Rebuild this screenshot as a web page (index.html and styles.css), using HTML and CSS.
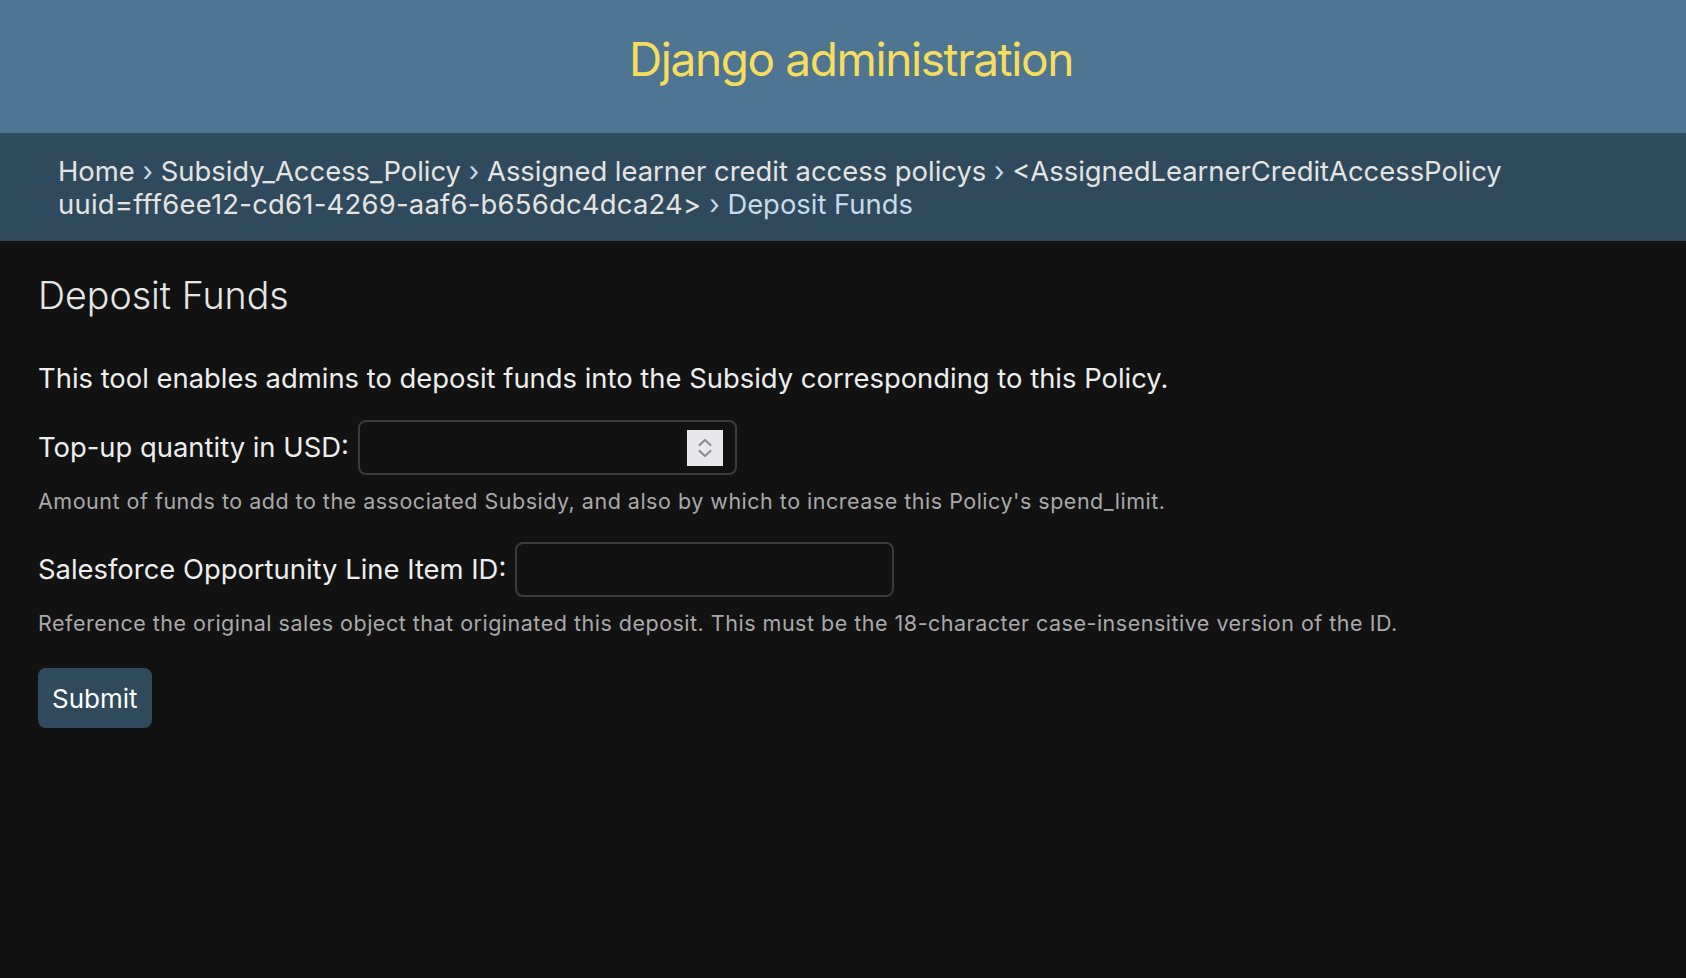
FILE: index.html
```html
<!DOCTYPE html>
<html lang="en">
<head>
<meta charset="utf-8">
<title>Deposit Funds | Django site admin</title>
<link rel="stylesheet" href="styles.css">
</head>
<body>
<header class="site-header">
  <h1 class="branding">Django administration</h1>
</header>
<nav class="breadcrumbs">
  <a href="#">Home</a> <span class="sep">›</span> <a href="#">Subsidy_Access_Policy</a> <span class="sep">›</span> <a href="#">Assigned learner credit access policys</a> <span class="sep">›</span> <a href="#">&lt;AssignedLearnerCreditAccessPolicy <span class="uuid">uuid=fff6ee12-cd61-4269-aaf6-b656dc4dca24&gt;</span></a> <span class="sep">›</span> <span class="current">Deposit Funds</span>
</nav>
<main class="content">
  <h1 class="page-title">Deposit Funds</h1>
  <p class="intro">This tool enables admins to deposit funds into the Subsidy corresponding to this Policy.</p>
  <form class="deposit-form">
    <div class="field-row">
      <label class="field-label" for="qty">Top-up quantity in USD:</label>
      <span class="input-wrap">
        <input class="field-input" id="qty" type="text">
        <span class="spinner" aria-hidden="true">
          <svg width="36" height="36" viewBox="0 0 36 36">
            <path d="M12.5 15 L18 10 L23.5 15" fill="none" stroke="#8e8d95" stroke-width="2.2" stroke-linecap="round" stroke-linejoin="round"/>
            <path d="M12.5 21 L18 26 L23.5 21" fill="none" stroke="#8e8d95" stroke-width="2.2" stroke-linecap="round" stroke-linejoin="round"/>
          </svg>
        </span>
      </span>
    </div>
    <p class="help">Amount of funds to add to the associated Subsidy, and also by which to increase this Policy's spend_limit.</p>
    <div class="field-row second">
      <label class="field-label" for="sf">Salesforce Opportunity Line Item ID:</label>
      <span class="input-wrap">
        <input class="field-input" id="sf" type="text">
      </span>
    </div>
    <p class="help">Reference the original sales object that originated this deposit. This must be the 18-character case-insensitive version of the ID.</p>
    <button class="submit-btn" type="button">Submit</button>
  </form>
</main>
</body>
</html>
```

FILE: styles.css
```css
html, body {
  margin: 0;
  padding: 0;
}

body {
  background: #121212;
  color: #eeeeee;
  font-family: Inter, "Noto Sans", "Liberation Sans", sans-serif;
  min-height: 978px;
}

.site-header {
  background: #4e7591;
  padding: 31px 0 46px 16px;
  text-align: center;
}

.branding {
  margin: 0;
  font-size: 46px;
  line-height: 56px;
  font-weight: 400;
  letter-spacing: -1.4px;
  color: #f5dd5d;
}

.breadcrumbs {
  background: #2f4a5c;
  padding: 22px 58px 20px 58px;
  font-size: 27.4px;
  line-height: 33px;
  color: #c4dce8;
}

.breadcrumbs a {
  color: #e4e4e4;
  text-decoration: none;
}

.breadcrumbs .uuid {
  letter-spacing: 0.25px;
}

.breadcrumbs .sep {
  color: #c4dce8;
}

.breadcrumbs .current {
  color: #c4dce8;
}

.content {
  padding: 32px 38px 40px 38px;
}

.page-title {
  margin: 0;
  font-size: 37.6px;
  line-height: 45px;
  font-weight: 300;
  color: #e6e6e6;
}

.intro {
  margin: 44px 0 0 0;
  font-size: 27.4px;
  line-height: 33px;
}

.deposit-form {
  margin: 25px 0 0 0;
}

.field-row {
  display: flex;
  align-items: center;
  gap: 9px;
}

.field-row.second {
  margin-top: 28px;
}

.field-label {
  font-size: 27.4px;
  line-height: 33px;
  color: #eeeeee;
}

.input-wrap {
  position: relative;
  display: inline-block;
}

.field-input {
  display: block;
  box-sizing: border-box;
  width: 379px;
  height: 55px;
  background: #121212;
  border: 2px solid #3b3b3b;
  border-radius: 8px;
  color: #eeeeee;
  font-family: inherit;
  font-size: 27px;
  padding: 0 12px;
  outline: none;
}

.spinner {
  position: absolute;
  top: 10px;
  right: 14px;
  width: 36px;
  height: 36px;
  background: #e8e7ec;
  display: block;
}

.spinner svg {
  display: block;
}

.help {
  margin: 13px 0 0 0;
  font-size: 21.5px;
  line-height: 26px;
  letter-spacing: 0.5px;
  color: #a9a9a9;
}

.submit-btn {
  display: block;
  margin-top: 32px;
  height: 60px;
  padding: 0 14px;
  background: #2f4a5c;
  color: #ffffff;
  border: none;
  border-radius: 8px;
  font-family: inherit;
  font-size: 26px;
  line-height: 33px;
  cursor: pointer;
}
```
